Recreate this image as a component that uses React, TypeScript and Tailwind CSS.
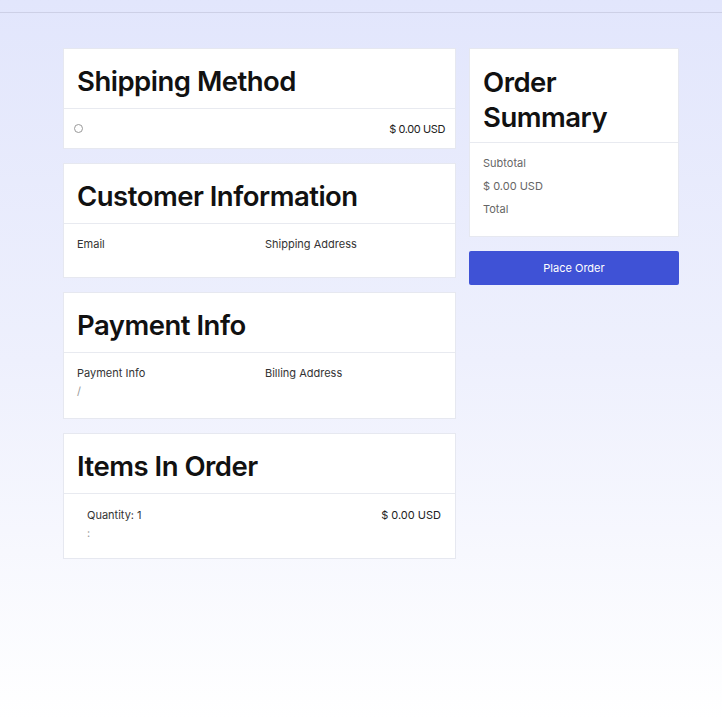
import React from "react";

function Card({ title, children, bodyClass }: { title: React.ReactNode; children: React.ReactNode; bodyClass?: string }) {
  return (
    <div className="bg-white border border-[#e6e8f0]">
      <div className="h-[60px] flex items-center pt-[4px] px-[13px] border-b border-[#e8eaf0]">
        <h2 className="text-[27.5px] leading-[34px] font-semibold tracking-[-0.5px] text-[#111]">{title}</h2>
      </div>
      <div className={bodyClass}>{children}</div>
    </div>
  );
}

export default function App() {
  return (
    <div
      className="min-h-[720px] bg-gradient-to-b from-[#e2e6fc] via-[#eef0fd] to-white text-[11px] leading-[14px] text-[#333]"
      style={{ fontFamily: "Inter, 'Noto Sans', sans-serif" }}
    >
      <div className="h-[13px] border-b border-[#cdd0e6]" />
      <div className="flex gap-[13px] pl-[63px] pt-[35px]">
        {/* Left column */}
        <div className="w-[393px] flex flex-col gap-[14px]">
          <Card title="Shipping Method" bodyClass="flex items-center justify-between px-[10px] h-[39px]">
            <span className="w-[9px] h-[9px] rounded-full border border-[#999]" />
            <span className="text-[#222] tracking-[-0.4px]">$ 0.00 USD</span>
          </Card>

          <Card title="Customer Information" bodyClass="flex px-[13px] pt-[13px] h-[53px]">
            <div className="w-[188px]">Email</div>
            <div>Shipping Address</div>
          </Card>

          <Card title="Payment Info" bodyClass="flex px-[13px] pt-[13px] h-[65px]">
            <div className="w-[188px]">
              <div>Payment Info</div>
              <div className="text-[#999] mt-[4px]">/</div>
            </div>
            <div>Billing Address</div>
          </Card>

          <Card title="Items In Order" bodyClass="pl-[23px] pr-[14px] pt-[14px] h-[64px]">
            <div className="flex justify-between">
              <div>
                <div>Quantity: 1</div>
                <div className="text-[#999] mt-[4px]">:</div>
              </div>
              <span className="text-[#222]">$ 0.00 USD</span>
            </div>
          </Card>
        </div>

        {/* Right column */}
        <div className="w-[210px] flex flex-col gap-[14px]">
          <div className="bg-white border border-[#e6e8f0]">
            <div className="h-[94px] px-[13px] pt-[16px] border-b border-[#e8eaf0]">
              <h2 className="text-[27.5px] leading-[35px] font-semibold tracking-[-0.5px] text-[#111]">
                Order
                <br />
                Summary
              </h2>
            </div>
            <div className="h-[93px] px-[13px] pt-[13px] flex flex-col gap-[9px] text-[#666]">
              <div>Subtotal</div>
              <div>$ 0.00 USD</div>
              <div>Total</div>
            </div>
          </div>
          <button className="h-[34px] rounded-[2px] bg-[#3f52d6] text-white text-[11px]">Place Order</button>
        </div>
      </div>
    </div>
  );
}
